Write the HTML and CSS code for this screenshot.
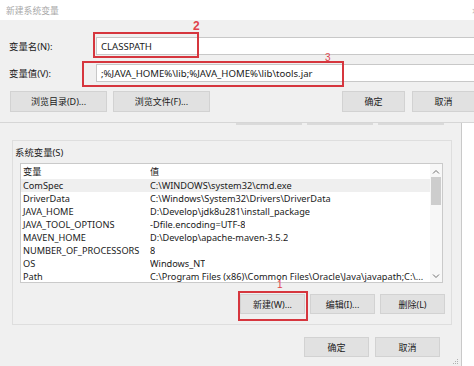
FILE: index.html
```html
<!DOCTYPE html>
<html>
<head>
    <title>新建系统变量</title>
    <link rel="stylesheet" href="styles.css">
</head>
<body>
    <div class="top-dialog">
        <div class="titlebar">
            <span class="title">新建系统变量</span>
            <span class="close">×</span>
        </div>
        <div class="dlg-body">
            <div class="field-row">
                <span class="field-label">变量名(N):</span>
                <div class="field-input">CLASSPATH</div>
            </div>
            <div class="field-row">
                <span class="field-label">变量值(V):</span>
                <div class="field-input">;%JAVA_HOME%\lib;%JAVA_HOME%\lib\tools.jar</div>
            </div>
            <div class="btn-row">
                <div class="btn btn-wide">浏览目录(D)...</div>
                <div class="btn btn-wide">浏览文件(F)...</div>
                <div class="btn btn-ok">确定</div>
                <div class="btn btn-cancel">取消</div>
            </div>
        </div>
    </div>

    <div class="back-dialog">
        <div class="peek-row">
            <span class="peek"></span>
            <span class="peek"></span>
            <span class="peek"></span>
        </div>

        <div class="group">
            <div class="group-label">系统变量(S)</div>
            <div class="list">
                <div class="list-rows">
                    <div class="row head"><span class="col-name">变量</span><span class="col-val">值</span></div>
                    <div class="row selected"><span class="col-name">ComSpec</span><span class="col-val">C:\WINDOWS\system32\cmd.exe</span></div>
                    <div class="row"><span class="col-name">DriverData</span><span class="col-val">C:\Windows\System32\Drivers\DriverData</span></div>
                    <div class="row"><span class="col-name">JAVA_HOME</span><span class="col-val">D:\Develop\jdk8u281\install_package</span></div>
                    <div class="row"><span class="col-name">JAVA_TOOL_OPTIONS</span><span class="col-val">-Dfile.encoding=UTF-8</span></div>
                    <div class="row"><span class="col-name">MAVEN_HOME</span><span class="col-val">D:\Develop\apache-maven-3.5.2</span></div>
                    <div class="row"><span class="col-name">NUMBER_OF_PROCESSORS</span><span class="col-val">8</span></div>
                    <div class="row"><span class="col-name">OS</span><span class="col-val">Windows_NT</span></div>
                    <div class="row"><span class="col-name">Path</span><span class="col-val">C:\Program Files (x86)\Common Files\Oracle\Java\javapath;C:\...</span></div>
                </div>
                <div class="scrollbar">
                    <svg class="arrow" width="12" height="8" viewBox="0 0 12 8"><path d="M3 5.5 L6 2.5 L9 5.5" fill="none" stroke="#707070" stroke-width="1"/></svg>
                    <div class="thumb"></div>
                    <div class="track"></div>
                    <svg class="arrow" width="12" height="8" viewBox="0 0 12 8"><path d="M3 2.5 L6 5.5 L9 2.5" fill="none" stroke="#707070" stroke-width="1"/></svg>
                </div>
            </div>
            <div class="list-btns">
                <div class="btn btn-sm">新建(W)...</div>
                <div class="btn btn-sm">编辑(I)...</div>
                <div class="btn btn-sm">删除(L)</div>
            </div>
        </div>

        <div class="footer-btns">
            <div class="btn btn-sm">确定</div>
            <div class="btn btn-sm">取消</div>
        </div>
        <svg class="grip" width="8" height="8" viewBox="0 0 8 8">
            <rect x="6" y="2" width="1" height="1" fill="#b0b0b0"/>
            <rect x="4" y="4" width="1" height="1" fill="#b0b0b0"/>
            <rect x="6" y="4" width="1" height="1" fill="#b0b0b0"/>
            <rect x="2" y="6" width="1" height="1" fill="#b0b0b0"/>
            <rect x="4" y="6" width="1" height="1" fill="#b0b0b0"/>
            <rect x="6" y="6" width="1" height="1" fill="#b0b0b0"/>
        </svg>
    </div>

    <!-- red annotation marks -->
    <div class="mark mark-2"></div>
    <span class="mark-num num-2">2</span>
    <div class="mark mark-3"></div>
    <span class="mark-num num-3">3</span>
    <div class="mark mark-1"></div>
    <span class="mark-num num-1">1</span>
</body>
</html>
```

FILE: styles.css
```css
body {
    margin: 0;
    width: 474px;
    height: 366px;
    overflow: hidden;
    position: relative;
    background: #ffffff;
    font-family: "Noto Sans", "Noto Sans CJK SC", sans-serif;
    font-size: 9.4px;
    color: #1a1a1a;
}

.top-dialog {
    height: 123px;
    background: #f0f0f0;
    border-bottom: 1px solid #d6d6d6;
    box-sizing: border-box;
}

.titlebar {
    height: 20px;
    background: #ffffff;
    display: flex;
    align-items: center;
    justify-content: space-between;
    padding: 0 0 0 6px;
}

.title {
    color: #a8a8a8;
    font-size: 8.8px;
}

.close {
    color: #b8b8b8;
    font-size: 11px;
    margin-right: -4px;
}

.dlg-body {
    padding-top: 17px;
}

.field-row {
    display: flex;
    align-items: center;
    height: 18px;
    margin-bottom: 9px;
}

.field-label {
    width: 87px;
    padding-left: 9px;
}

.field-input {
    flex: 1;
    height: 18px;
    background: #ffffff;
    border: 1px solid #c8c8c8;
    border-right: none;
    box-sizing: border-box;
    padding-left: 4px;
    display: flex;
    align-items: center;
    white-space: nowrap;
    font-size: 9.6px;
}

.btn-row {
    display: flex;
    width: 475px;
    box-sizing: border-box;
    padding-left: 10px;
    margin-top: 1px;
}

.btn {
    height: 21px;
    background: #e1e1e1;
    border: 1px solid #d2d2d2;
    box-sizing: border-box;
    display: flex;
    align-items: center;
    justify-content: center;
    white-space: nowrap;
    font-size: 9px;
}

.btn-wide {
    width: 97px;
    margin-right: 6px;
}

.btn-ok {
    width: 63px;
    margin-left: auto;
}

.btn-cancel {
    width: 63px;
    margin-left: 7px;
}

.back-dialog {
    width: 462px;
    height: 243px;
    background: #f0f0f0;
    border-right: 1px solid #c9c9c9;
    box-sizing: border-box;
    position: relative;
}

.peek-row {
    display: flex;
    height: 3px;
    padding-left: 236px;
}

.peek {
    width: 66px;
    height: 2px;
    background: #dadada;
    margin-right: 5px;
}

.group {
    margin: 14px 0 0 12px;
    width: 440px;
    height: 185px;
    border: 1px solid #dedede;
    box-sizing: border-box;
}

.group-label {
    height: 14px;
    line-height: 14px;
    margin: 5px 0 0 2px;
}

.list {
    display: flex;
    margin: 3px 0 0 7px;
    width: 423px;
    height: 120px;
    background: #ffffff;
    border: 1px solid #cacaca;
    box-sizing: border-box;
    overflow: hidden;
    font-size: 9.2px;
}

.list-rows {
    flex: 1;
    min-width: 0;
}

.row {
    display: flex;
    height: 13px;
    line-height: 13px;
    white-space: nowrap;
}

.row.head {
    height: 15px;
    line-height: 15px;
}

.row.selected {
    background: #efefef;
}

.col-name {
    flex: none;
    width: 127px;
    padding-left: 2px;
}

.col-val {
    overflow: hidden;
}

.scrollbar {
    width: 12px;
    background: #f7f7f7;
    display: flex;
    flex-direction: column;
}

.arrow {
    display: block;
    margin-top: 4px;
}

.thumb {
    height: 28px;
    margin: 1px 1px 0;
    background: #cdcdcd;
}

.track {
    flex: 1;
}

.scrollbar .arrow:last-child {
    margin: 0 0 2px;
}

.list-btns {
    display: flex;
    justify-content: flex-end;
    gap: 5px;
    padding-right: 6px;
    margin-top: 11px;
}

.btn-sm {
    width: 65px;
    height: 20px;
}

.footer-btns {
    display: flex;
    justify-content: flex-end;
    gap: 6px;
    padding-right: 21px;
    margin-top: 12px;
}

.grip {
    position: absolute;
    right: 2px;
    bottom: 1px;
}

.mark {
    position: absolute;
    border: 2px solid #d6363e;
    box-sizing: border-box;
}

.mark-2 {
    left: 93px;
    top: 32px;
    width: 106px;
    height: 26px;
}

.mark-3 {
    left: 82px;
    top: 61px;
    width: 262px;
    height: 26px;
}

.mark-1 {
    left: 238px;
    top: 291px;
    width: 70px;
    height: 30px;
}

.mark-num {
    position: absolute;
    color: #e0434b;
    font-family: "Liberation Sans", sans-serif;
    line-height: 1;
}

.num-2 {
    left: 193px;
    top: 20px;
    font-size: 12px;
    font-weight: bold;
}

.num-3 {
    left: 325px;
    top: 53px;
    font-size: 10px;
}

.num-1 {
    left: 277px;
    top: 280px;
    font-size: 10px;
}
```
